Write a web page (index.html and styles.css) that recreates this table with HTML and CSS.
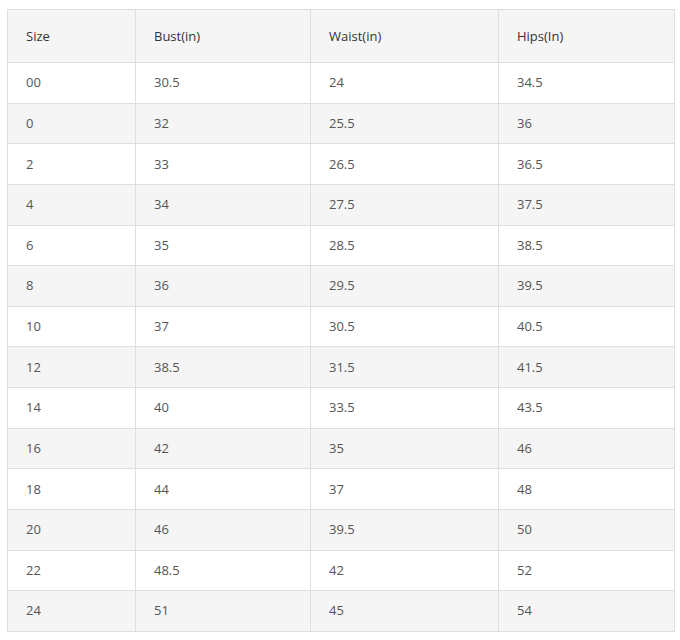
FILE: index.html
```html
<!DOCTYPE html>
<html>
<head>
<meta charset="utf-8">
<link rel="stylesheet" href="styles.css">
</head>
<body>
<table class="size-table">
  <colgroup>
    <col class="c1"><col class="c2"><col class="c3"><col class="c4">
  </colgroup>
  <thead>
    <tr><th>Size</th><th>Bust(in)</th><th>Waist(in)</th><th>Hips(In)</th></tr>
  </thead>
  <tbody>
    <tr><td>00</td><td>30.5</td><td>24</td><td>34.5</td></tr>
    <tr><td>0</td><td>32</td><td>25.5</td><td>36</td></tr>
    <tr><td>2</td><td>33</td><td>26.5</td><td>36.5</td></tr>
    <tr><td>4</td><td>34</td><td>27.5</td><td>37.5</td></tr>
    <tr><td>6</td><td>35</td><td>28.5</td><td>38.5</td></tr>
    <tr><td>8</td><td>36</td><td>29.5</td><td>39.5</td></tr>
    <tr><td>10</td><td>37</td><td>30.5</td><td>40.5</td></tr>
    <tr><td>12</td><td>38.5</td><td>31.5</td><td>41.5</td></tr>
    <tr><td>14</td><td>40</td><td>33.5</td><td>43.5</td></tr>
    <tr><td>16</td><td>42</td><td>35</td><td>46</td></tr>
    <tr><td>18</td><td>44</td><td>37</td><td>48</td></tr>
    <tr><td>20</td><td>46</td><td>39.5</td><td>50</td></tr>
    <tr><td>22</td><td>48.5</td><td>42</td><td>52</td></tr>
    <tr><td>24</td><td>51</td><td>45</td><td>54</td></tr>
  </tbody>
</table>
</body>
</html>
```
FILE: styles.css
```css
html, body {
  margin: 0;
  background: #fff;
}
body {
  padding: 9px 0 0 7px;
  font-family: "Open Sans", "Noto Sans", sans-serif;
  font-size: 13px;
  color: #555;
}
.size-table {
  border-collapse: collapse;
  table-layout: fixed;
  width: 667px;
}
.c1 { width: 128px; }
.c2 { width: 175px; }
.c3 { width: 188px; }
.c4 { width: 176px; }
.size-table th,
.size-table td {
  border: 1px solid #dedede;
  text-align: left;
  vertical-align: middle;
  padding: 0 0 1px 18px;
  font-weight: normal;
}
.size-table th {
  height: 51px;
  color: #333;
  background: #f5f5f5;
}
.size-table td {
  height: 38.64px;
}
.size-table tbody tr:nth-child(even) td {
  background: #f5f5f5;
}
```
